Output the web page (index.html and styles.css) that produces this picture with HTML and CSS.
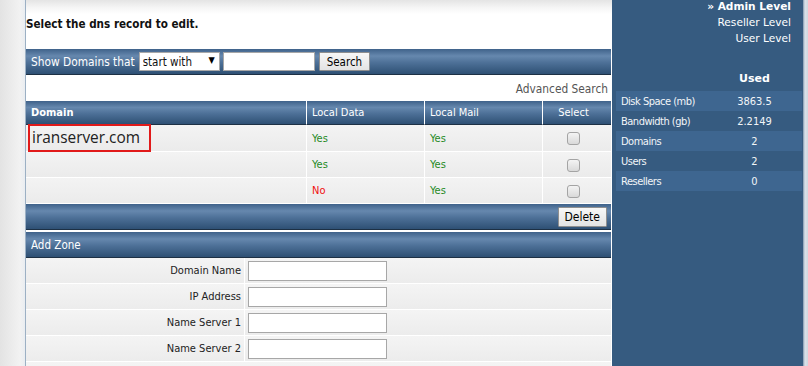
FILE: index.html
```html
<!DOCTYPE html>
<html lang="en">

<head>
    <meta charset="UTF-8">
    <title>DNS Administration</title>
    <link rel="stylesheet" href="styles.css">
</head>

<body>
    <div class="page">
        <div class="gutter"></div>

        <div class="main">
            <h3 class="title">Select the dns record to edit.</h3>

            <form class="filter bar">
                <span class="filter-label">Show Domains that</span>
                <span class="select-wrap">
                    <select class="select">
                        <option>start with</option>
                        <option>contain</option>
                    </select>
                </span>
                <input class="field filter-field" type="text">
                <button class="btn" type="button">Search</button>
            </form>

            <div class="adv"><a href="#">Advanced Search</a></div>

            <table class="list">
                <tr>
                    <th class="col-domain">Domain</th>
                    <th class="col-data">Local Data</th>
                    <th class="col-mail">Local Mail</th>
                    <th class="col-select">Select</th>
                </tr>
                <tr class="first">
                    <td class="domain"><span class="marked">iranserver.com</span></td>
                    <td class="yes">Yes</td>
                    <td class="yes">Yes</td>
                    <td class="check"><input type="checkbox"></td>
                </tr>
                <tr>
                    <td class="domain"></td>
                    <td class="yes">Yes</td>
                    <td class="yes">Yes</td>
                    <td class="check"><input type="checkbox"></td>
                </tr>
                <tr>
                    <td class="domain"></td>
                    <td class="no">No</td>
                    <td class="yes">Yes</td>
                    <td class="check"><input type="checkbox"></td>
                </tr>
                <tr>
                    <td class="foot" colspan="4"><button class="btn" type="button">Delete</button></td>
                </tr>
            </table>

            <table class="zone">
                <colgroup>
                    <col class="zone-label-col">
                    <col>
                </colgroup>
                <tr>
                    <th class="bar" colspan="2">Add Zone</th>
                </tr>
                <tr class="first">
                    <td class="label">Domain Name</td>
                    <td class="value"><input class="field" type="text"></td>
                </tr>
                <tr>
                    <td class="label">IP Address</td>
                    <td class="value"><input class="field" type="text"></td>
                </tr>
                <tr>
                    <td class="label">Name Server 1</td>
                    <td class="value"><input class="field" type="text"></td>
                </tr>
                <tr>
                    <td class="label">Name Server 2</td>
                    <td class="value"><input class="field" type="text"></td>
                </tr>
                <tr>
                    <td class="bar" colspan="2">&nbsp;</td>
                </tr>
            </table>
        </div>

        <div class="side">
            <div class="levels">
                <a class="current" href="#">&raquo; Admin Level</a>
                <a href="#">Reseller Level</a>
                <a href="#">User Level</a>
            </div>

            <table class="usage">
                <tr>
                    <th></th>
                    <th>Used</th>
                </tr>
                <tr class="alt">
                    <td>Disk Space (mb)</td>
                    <td class="num">3863.5</td>
                </tr>
                <tr>
                    <td>Bandwidth (gb)</td>
                    <td class="num">2.2149</td>
                </tr>
                <tr class="alt">
                    <td>Domains</td>
                    <td class="num">2</td>
                </tr>
                <tr>
                    <td>Users</td>
                    <td class="num">2</td>
                </tr>
                <tr class="alt">
                    <td>Resellers</td>
                    <td class="num">0</td>
                </tr>
            </table>
        </div>

        <div class="edge"></div>
    </div>
</body>

</html>
```

FILE: styles.css
```css
/* Layout */
body {
    margin: 0;
    font-family: "DejaVu Sans Condensed", "DejaVu Sans", sans-serif;
    font-size: 11px;
    color: #222;
    overflow: hidden;
}

.page {
    display: flex;
    height: 366px;
    overflow: hidden;
}

.gutter {
    width: 25px;
    flex: none;
    background: linear-gradient(to right, #e3e3e3, #f2f2f2 80%, #e9edf1);
    border-right: 1px solid #9cb0c4;
}

.main {
    width: 586px;
    flex: none;
    background: linear-gradient(#e4e4e4, #f6f6f6 8px, #fff 14px);
}

.side {
    width: 191px;
    flex: none;
    background-color: #365b80;
    color: #fff;
}

.edge {
    flex: 1;
    background: linear-gradient(to right, #7f96ae, #dbe2ea 2px, #cfd7df);
}

/* Blue bars */
.bar,
.list th,
.list td.foot {
    background: linear-gradient(#3f628a 0%, #6688ae 28%, #4d7097 55%, #2e5074 100%);
    border-bottom: 1px solid #1d3044;
    color: #fff;
}

.title {
    margin: 0;
    height: 49px;
    padding-top: 16px;
    box-sizing: border-box;
    line-height: 16px;
    font-size: 11.6px;
    font-weight: bold;
    color: #111;
}

.filter {
    display: flex;
    align-items: center;
    height: 26px;
    width: 585px;
    margin: 0;
    padding-left: 5px;
    box-sizing: border-box;
}

.filter-label {
    margin-right: 4px;
    font-size: 11.8px;
}

.select-wrap {
    position: relative;
    margin-right: 3px;
}

.select-wrap::after {
    content: "\25BC";
    position: absolute;
    right: 5px;
    top: 3px;
    font-size: 9px;
    color: #000;
    pointer-events: none;
}

.select {
    display: block;
    appearance: none;
    width: 81px;
    height: 19px;
    border: 1px solid #a9a9a9;
    border-radius: 0;
    background: #fff;
    padding: 0 0 0 3px;
    font-family: inherit;
    font-size: 11.5px;
    color: #111;
}

.field {
    height: 19px;
    box-sizing: border-box;
    border: 1px solid #a7a7a7;
    background: #fff;
    padding: 1px 3px;
}

.filter-field {
    width: 92px;
    margin-right: 4px;
}

.btn {
    height: 19px;
    padding: 0 7px;
    border: 1px solid #8f8f8f;
    border-radius: 1px;
    background: linear-gradient(#f7f7f7, #e3e3e3);
    font-family: inherit;
    font-size: 11.5px;
    color: #000;
}

.adv {
    height: 26px;
    box-sizing: border-box;
    text-align: right;
    padding: 7px 4px 0 0;
}

.adv a {
    color: #555;
    text-decoration: none;
    font-size: 11.8px;
}

/* Domain table */
.list,
.zone {
    width: 585px;
    border-collapse: separate;
    border-spacing: 0;
    table-layout: fixed;
}

.list th {
    height: 23px;
    padding: 0 0 0 5px;
    text-align: left;
    font-weight: normal;
    border-left: 1px solid #fff;
}

.list th.col-domain {
    width: 275px;
    border-left: 0;
    font-weight: bold;
}

.list th.col-data,
.list th.col-mail {
    width: 112px;
}

.list th.col-select {
    text-align: center;
    padding: 0 7px 0 0;
}

.list td {
    height: 25px;
    padding: 0 0 0 5px;
    background: linear-gradient(#f3f3f3, #ebebeb);
    border-left: 1px solid #fff;
    border-top: 1px solid #fff;
}

.list td.domain {
    border-left: 0;
    padding-left: 2px;
}

.list tr.first td {
    height: 26px;
    border-top: 0;
}

.marked {
    display: inline-block;
    border: 2px solid #e11a1a;
    padding: 1px 9px 2px 2px;
    margin: -1px 0;
    line-height: 21px;
    font-family: "Open Sans", sans-serif;
    font-size: 15.4px;
    color: #222;
}

.yes {
    color: #1f8a1f;
}

.no {
    color: #f01010;
}

.list td.check {
    padding: 0 7px 0 0;
    text-align: center;
}

.check input {
    appearance: none;
    width: 13px;
    height: 13px;
    margin: 4px 0 0;
    border: 1px solid #a4a4a4;
    border-radius: 3px;
    background: linear-gradient(#f4f4f4, #d9d9d9);
}

.list td.foot {
    height: 25px;
    padding: 0 4px 0 0;
    border-left: 0;
    text-align: right;
}

.foot .btn {
    height: 20px;
    margin-top: 1px;
    padding: 0 6px;
    font-size: 12px;
}

/* Add zone form */
.zone {
    margin-top: 2px;
}

.zone-label-col {
    width: 218px;
}

.zone th {
    height: 25px;
    padding: 0 0 0 5px;
    text-align: left;
    font-weight: normal;
    font-size: 11.5px;
}

.zone td {
    height: 25px;
    padding: 0;
    background: linear-gradient(#f4f4f4, #ececec);
    border-top: 1px solid #fff;
}

.zone tr.first td {
    border-top: 0;
}

.zone td.label {
    padding-right: 3px;
    text-align: right;
    color: #222;
}

.zone td.value {
    padding-left: 3px;
    border-left: 1px solid #fff;
}

.value .field {
    display: block;
    width: 139px;
    height: 20px;
}

.zone td.bar {
    height: 24px;
}

/* Sidebar */
.levels {
    margin-top: -2px;
    padding-right: 12px;
    text-align: right;
    line-height: 16px;
    font-size: 10.6px;
}

.levels a {
    display: block;
    color: #fff;
    text-decoration: none;
    font-family: "DejaVu Sans", sans-serif;
}

.levels a.current {
    font-weight: bold;
}

.usage {
    width: 186px;
    margin: 21px 0 0 4px;
    border-collapse: collapse;
}

.usage th {
    height: 20px;
    padding-bottom: 3px;
    font-family: "DejaVu Sans", sans-serif;
    font-weight: bold;
}

.usage th:first-child {
    width: 89px;
}

.usage td {
    height: 20px;
    padding: 0 0 0 5px;
    letter-spacing: -0.5px;
    color: #f2f5f8;
}

.usage td.num {
    padding: 0;
    text-align: center;
    letter-spacing: 0;
}

.usage tr.alt td {
    background-color: #3e6690;
}
```
